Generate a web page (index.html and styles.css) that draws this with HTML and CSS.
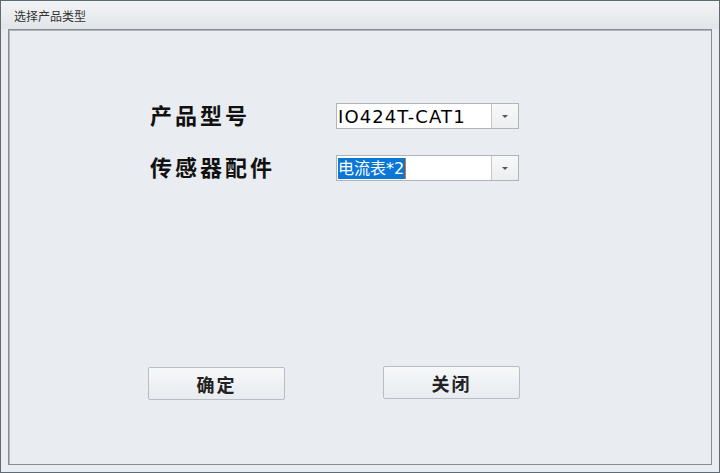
FILE: index.html
```html
<!DOCTYPE html>
<html lang="zh-CN">
<head>
  <meta charset="UTF-8">
  <title>选择产品类型</title>
  <link rel="stylesheet" href="styles.css">
</head>
<body>

<div class="window">
  <div class="titlebar">选择产品类型</div>

  <div class="panel">
    <div class="form">
      <div class="row">
        <span class="label">产品型号</span>
        <div class="combo">
          <span class="combo-text">IO424T-CAT1</span>
          <span class="combo-btn"><span class="arrow"></span></span>
        </div>
      </div>
      <div class="row">
        <span class="label">传感器配件</span>
        <div class="combo">
          <span class="combo-text"><span class="selected">电流表*2</span><span class="caret"></span></span>
          <span class="combo-btn"><span class="arrow"></span></span>
        </div>
      </div>
    </div>

    <div class="actions">
      <button class="btn btn-ok">确定</button>
      <button class="btn btn-close">关闭</button>
    </div>
  </div>
</div>

</body>
</html>
```

FILE: styles.css
```css
html, body {
  margin: 0;
  padding: 0;
  height: 100%;
  background-color: #e9ecf0;
  font-family: "Noto Sans CJK SC", "Noto Sans", sans-serif;
}

.window {
  box-sizing: border-box;
  width: 720px;
  height: 473px;
  border: 1px solid #5f6a74;
  background-color: #e9ecf0;
  display: flex;
  flex-direction: column;
}

.titlebar {
  height: 28px;
  box-sizing: border-box;
  padding: 6px 0 0 13px;
  font-size: 12px;
  line-height: 18px;
  color: #333;
  background: linear-gradient(#f2f3f5, #e2e5e9);
}

.panel {
  height: 436px;
  box-sizing: border-box;
  margin: 0 7px;
  border: 1px solid #868c93;
  box-shadow: inset 1px 1px 0 #b2b6bb;
  background-color: #e9ecf0;
  display: flex;
  flex-direction: column;
}

.form {
  padding: 73px 0 0 141px;
  display: flex;
  flex-direction: column;
  gap: 26px;
}

.row {
  display: flex;
  align-items: center;
  height: 26px;
}

.label {
  width: 186px;
  font-size: 22px;
  font-weight: bold;
  letter-spacing: 3px;
  color: #111;
  line-height: 26px;
  margin-top: -4px;
}

.combo {
  box-sizing: border-box;
  width: 183px;
  height: 26px;
  border: 1px solid #b0b3b8;
  background-color: #fff;
  display: flex;
}

.combo-text {
  flex: 1;
  display: flex;
  align-items: center;
  padding-left: 1px;
  font-family: "DejaVu Sans", "Noto Sans CJK SC", sans-serif;
  font-size: 18px;
  letter-spacing: 1.1px;
  color: #000;
}

.selected {
  background-color: #0a76d6;
  color: #fff;
  font-size: 16px;
  letter-spacing: 0;
  line-height: 21px;
  padding-right: 1px;
}

.caret {
  width: 1px;
  height: 21px;
  background-color: #e8720c;
}

.combo-btn {
  width: 26px;
  border-left: 1px solid #c4c6ca;
  background: linear-gradient(#f7f8f9, #eceef0);
  display: flex;
  align-items: center;
  justify-content: center;
}

.arrow {
  width: 0;
  height: 0;
  border-left: 3.5px solid transparent;
  border-right: 3.5px solid transparent;
  border-top: 3px solid #555;
}

.actions {
  display: flex;
  padding: 0 0 0 139px;
  margin-top: 185px;
  gap: 98px;
  align-items: flex-start;
}

.btn {
  box-sizing: border-box;
  width: 137px;
  height: 33px;
  border: 1px solid #b9bcc0;
  border-radius: 2px;
  background: linear-gradient(#f6f8fa, #e8ebef);
  font-family: "Noto Sans CJK SC", sans-serif;
  font-size: 18px;
  font-weight: bold;
  letter-spacing: 2px;
  color: #222;
  padding: 0;
  cursor: pointer;
}

.btn-ok {
  margin-top: 1px;
}
```
